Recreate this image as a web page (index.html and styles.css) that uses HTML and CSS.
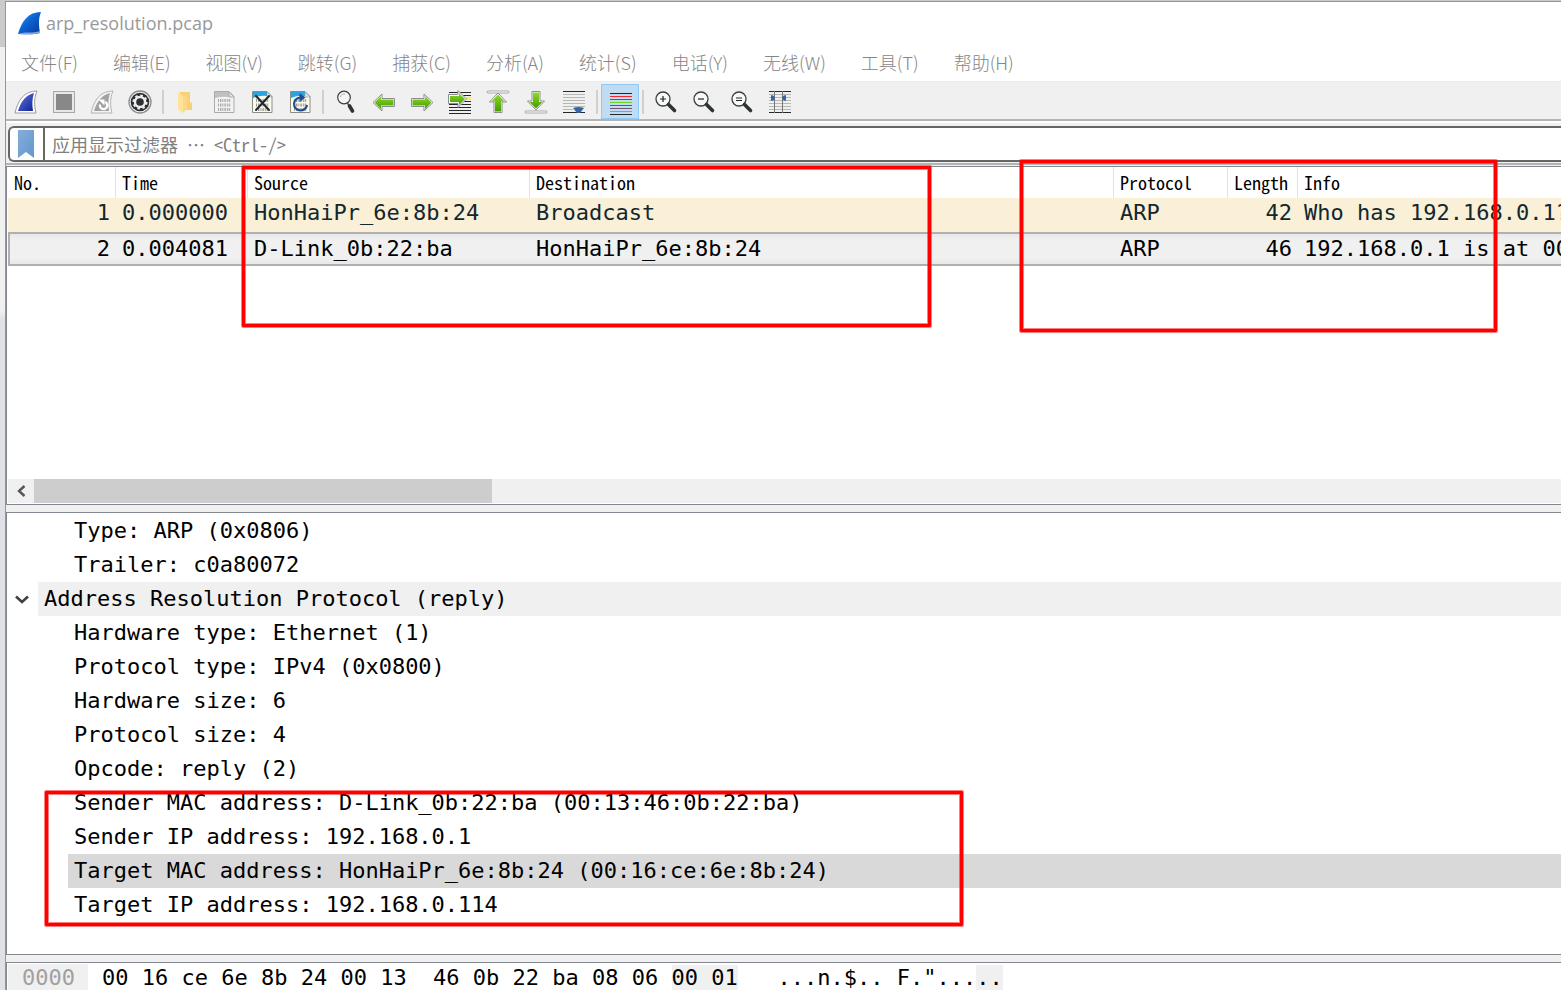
FILE: index.html
```html
<!DOCTYPE html>
<html lang="zh-CN">
<head>
<meta charset="utf-8">
<title>arp_resolution.pcap</title>
<link rel="stylesheet" href="styles.css">
</head>
<body>
<svg class="defs" aria-hidden="true">
  <defs>
    <linearGradient id="blueFin" x1="0" y1="0" x2="1" y2="1"><stop offset="0" stop-color="#5b7bea"/><stop offset="1" stop-color="#16208f"/></linearGradient>
    <linearGradient id="logoFin" x1="0" y1="0" x2="1" y2="1"><stop offset="0" stop-color="#1e9bf5"/><stop offset=".5" stop-color="#0a5fd0"/><stop offset="1" stop-color="#0a3796"/></linearGradient>
    <linearGradient id="green" x1="0" y1="0" x2="0" y2="1"><stop offset="0" stop-color="#8ddb2a"/><stop offset="1" stop-color="#449c02"/></linearGradient>
    <linearGradient id="flag" x1="0" y1="0" x2="1" y2="1"><stop offset="0" stop-color="#84aeda"/><stop offset="1" stop-color="#6396cc"/></linearGradient>
    <g id="bits" stroke-width="3" stroke-dasharray="1 1 1 .6">
      <path d="M6 10.500h13M6 15h13M6 19.500h13"/>
    </g>
    <g id="lens">
      <circle cx="9" cy="9" r="7" fill="#f8f8f8" stroke="#3a3f3e" stroke-width="1.3"/>
      <path d="M14.500 14.500l6 6" stroke="#2e3436" stroke-width="3.6" stroke-linecap="round"/>
    </g>
  </defs>
</svg>
<div class="window">
  <header class="titlebar">
    <svg class="logo" viewBox="0 0 24 24"><path d="M1 23C5 10 11 1 24 1C21 8 22 15 23 22C16 24 8 23 1 23Z" fill="url(#logoFin)"/><path d="M1 23C8 20 16 23 23 20V22C16 24 8 23 1 23Z" fill="#7fa8de"/></svg>
    <h1 class="title">arp_resolution.pcap</h1>
  </header>
  <nav class="menubar">
    <button>文件(F)</button><button>编辑(E)</button><button>视图(V)</button><button>跳转(G)</button><button>捕获(C)</button><button>分析(A)</button><button>统计(S)</button><button>电话(Y)</button><button>无线(W)</button><button>工具(T)</button><button>帮助(H)</button>
  </nav>
  <div class="toolbar" role="toolbar">
    <button aria-label="Start capture"><svg viewBox="0 0 24 24"><path d="M1 23C4 10 10 1 23 1C20 8 20 15 22 23Z" fill="#fff" stroke="#9b9b9b"/><path d="M4 21C7 11 12 5 20 3C18 9 18 15 19 21Z" fill="url(#blueFin)"/></svg></button>
    <button aria-label="Stop capture"><svg viewBox="0 0 24 24"><rect x="1.500" y="1.500" width="21" height="21" fill="#e8e8e8" stroke="#a8a8a8"/><rect x="4" y="4" width="16" height="16" fill="#888"/></svg></button>
    <button aria-label="Restart capture"><svg viewBox="0 0 24 24"><path d="M1 23C4 10 10 1 23 1C20 8 20 15 22 23Z" fill="#f3f3f3" stroke="#b4b4b4"/><path d="M4 21C7 11 12 5 20 3C18 9 18 15 19 21Z" fill="#a3a3a3"/><path d="M10 14.500a3.700 3.700 0 1 0 5-2.500" fill="none" stroke="#fff" stroke-width="2.300"/><path d="M8.500 9.500h6v6z" fill="#fff"/></svg></button>
    <button aria-label="Capture options"><svg viewBox="0 0 24 24"><circle cx="12" cy="12" r="11" fill="#f2f2f2" stroke="#8d8d8d" stroke-width="1.300"/><circle cx="12" cy="12" r="9.300" fill="#2d3033"/><circle cx="12" cy="12" r="5" fill="none" stroke="#eee" stroke-width="2.400"/><circle cx="12" cy="12" r="6.600" fill="none" stroke="#eee" stroke-width="2" stroke-dasharray="2.600 2.580"/><circle cx="12" cy="12" r="2.600" fill="#2d3033"/></svg></button>
    <span class="sep"></span>
    <button aria-label="Open file"><svg viewBox="0 0 24 24"><path d="M6 2h10v10l2 1v7H6z" fill="#f8d075"/><path d="M4 2l5 4v17l-5-3z" fill="#ffe39b"/><path d="M9 8l4-4v15l-4 4z" fill="#fbd983"/></svg></button>
    <button aria-label="Save file"><svg viewBox="0 0 24 24"><path d="M2.500 1.500H17l5 5v16H2.500z" fill="#f2f2f2" stroke="#ababab"/><path d="M3 2h14v5q-7-1-14 1z" fill="#c0c0c0"/><path d="M17 2v5h5z" fill="#e5e5e5" stroke="#ababab"/><use href="#bits" stroke="#a8a8a8"/></svg></button>
    <button aria-label="Close file"><svg viewBox="0 0 24 24"><path d="M2.500 1.500H17l5 5v16H2.500z" fill="#fcfcec" stroke="#8c8c84"/><path d="M3 2h14v4q-7-1-14 2z" fill="#2ba5e2"/><path d="M17 2v5h5z" fill="#d6e9f0" stroke="#8c8c84" stroke-width=".5"/><use href="#bits" stroke="#999"/><path d="M6 6l13 14M19 6L6 20" stroke="#24282c" stroke-width="2" stroke-linecap="round"/></svg></button>
    <button aria-label="Reload file"><svg viewBox="0 0 24 24"><path d="M2.500 1.500H17l5 5v16H2.500z" fill="#fcfcec" stroke="#8c8c84"/><path d="M3 2h14v4q-7-1-14 2z" fill="#2ba5e2"/><path d="M17 2v5h5z" fill="#d6e9f0" stroke="#8c8c84" stroke-width=".5"/><use href="#bits" stroke="#999"/><path d="M12.500 7.500a6.500 6.500 0 1 0 6.500 7.500" fill="none" stroke="#204e92" stroke-width="2.200"/><path d="M11.500 3l6 4.500-6 4.500z" fill="#204e92"/></svg></button>
    <span class="sep"></span>
    <button aria-label="Find packet"><svg viewBox="0 0 24 24"><circle cx="10" cy="7.500" r="6.300" fill="#f6f6f6" stroke="#3a3f3e" stroke-width="1.200"/><path d="M6.500 7a3.500 3.500 0 0 1 4.500-3" fill="none" stroke="#aaa"/><path d="M13 12.500l2 3" stroke="#555" stroke-width="1.500"/><path d="M15.500 16l3 5" stroke="#2e3436" stroke-width="3.600" stroke-linecap="round"/></svg></button>
    <button aria-label="Previous packet"><svg viewBox="0 0 24 24"><path d="M1 12.500L10 4v4.500h12.500v8H10V21z" fill="#fff" stroke="#8d8d8d" stroke-linejoin="round"/><path d="M2.500 12.500L9 6v3.500h12.500v6H9V19z" fill="url(#green)"/></svg></button>
    <button aria-label="Next packet"><svg viewBox="0 0 24 24"><path d="M23 12.500L14 4v4.500H1.500v8H14V21z" fill="#fff" stroke="#8d8d8d" stroke-linejoin="round"/><path d="M21.500 12.500L15 6v3.500H2.500v6H15V19z" fill="url(#green)"/></svg></button>
    <button aria-label="Go to packet"><svg viewBox="0 0 24 24"><path d="M1 2.500h22M1 17.500h22M1 20.500h22M1 23.500h22M1 14.500h22M15 5.500h8M15 11.500h8" stroke="#24282a"/><path d="M17 8.500h6" stroke="#fce94f" stroke-width="3"/><path d="M18.500 9L10 .5v4H.5v9H10v4z" fill="#fff" stroke="#8d8d8d" stroke-linejoin="round"/><path d="M17 9l-6-6v3H2v6h9v3z" fill="url(#green)"/></svg></button>
    <button aria-label="First packet"><svg viewBox="0 0 24 24"><rect x="1" y="1" width="22" height="2" rx="1" fill="#fff" stroke="#888" stroke-width=".7"/><path d="M12 3L3.500 12H8v10.500h8V12h4.500z" fill="#fff" stroke="#8d8d8d" stroke-linejoin="round"/><path d="M12 4.500l-6.500 7H9v10h6v-10h3.500z" fill="url(#green)"/></svg></button>
    <button aria-label="Last packet"><svg viewBox="0 0 24 24"><rect x="1" y="21" width="22" height="2" rx="1" fill="#fff" stroke="#888" stroke-width=".7"/><path d="M12 20l-8.500-9H8V1.500h8V11h4.500z" fill="#fff" stroke="#8d8d8d" stroke-linejoin="round"/><path d="M12 18.500L5.500 12H9V2.500h6V12h3.500z" fill="url(#green)"/></svg></button>
    <button aria-label="Auto scroll"><svg viewBox="0 0 24 24"><path d="M1 1.500h22M1 22.500h22" stroke="#24282a"/><path d="M1 4.500h22M1 7.500h22M1 10.500h22M1 13.500h22M1 16.500h22M1 19.500h10" stroke="#b5b8b0"/><path d="M11 18q5.500-2 11 0l-4 5h-3z" fill="#3465a4"/></svg></button>
    <span class="sep"></span>
    <button class="active" aria-label="Colorize" aria-pressed="true"><svg viewBox="0 0 24 24"><g><path d="M1 2.500h22M1 23.500h22" stroke="#24282a"/><path d="M1 5.500h22" stroke="#ef2929"/><path d="M1 8.500h22" stroke="#3465a4"/><path d="M1 11.500h22" stroke="#73d216"/><path d="M1 14.500h22" stroke="#3465a4"/><path d="M1 17.500h22" stroke="#75507b"/><path d="M1 20.500h22" stroke="#c4a000"/></g></svg></button>
    <span class="sep"></span>
    <button aria-label="Zoom in"><svg viewBox="0 0 24 24"><use href="#lens"/><path d="M6 9h6M9 6v6" stroke="#222" stroke-width="1.200"/></svg></button>
    <button aria-label="Zoom out"><svg viewBox="0 0 24 24"><use href="#lens"/><path d="M6 9h6" stroke="#222" stroke-width="1.200"/></svg></button>
    <button aria-label="Normal size"><svg viewBox="0 0 24 24"><use href="#lens"/><path d="M6 8h6M6 10.500h6" stroke="#222" stroke-width="1.200"/></svg></button>
    <button aria-label="Resize columns"><svg viewBox="0 0 24 24"><path d="M1 1.500h22M1 22.500h22" stroke="#24282a"/><path d="M1 4.500h22M1 7.500h22M1 10.500h22M1 13.500h22M1 16.500h22M1 19.500h22" stroke="#b5b8b0"/><path d="M6.500 1v22M14.500 1v22" stroke="#777"/><path d="M3.500 5.500l2.500 1v3l-2.500 1zM17.500 5.500l-2.500 1v3l2.500 1z" fill="#3465a4" stroke="#3465a4"/></svg></button>
  </div>
  <div class="filterbar">
    <div class="filterbox">
      <button class="bookmark" aria-label="Bookmark"><svg viewBox="0 0 16 28"><path d="M0 0h16v28l-8-6-8 6z" fill="url(#flag)"/></svg></button>
      <input class="filter" type="text" aria-label="Display filter" placeholder="应用显示过滤器 … &lt;Ctrl-/&gt;">
    </div>
  </div>
  <main class="panes">
    <section class="pane packets">
      <table class="list">
        <colgroup><col class="c-no"><col class="c-time"><col class="c-src"><col class="c-dst"><col class="c-proto"><col class="c-len"><col></colgroup>
        <thead><tr><th>No.</th><th>Time</th><th>Source</th><th>Destination</th><th>Protocol</th><th>Length</th><th>Info</th></tr></thead>
        <tbody>
          <tr class="arp"><td class="num">1</td><td>0.000000</td><td>HonHaiPr_6e:8b:24</td><td>Broadcast</td><td>ARP</td><td class="num">42</td><td>Who has 192.168.0.1?</td></tr>
          <tr class="current"><td class="num">2</td><td>0.004081</td><td>D-Link_0b:22:ba</td><td>HonHaiPr_6e:8b:24</td><td>ARP</td><td class="num">46</td><td>192.168.0.1 is at 00</td></tr>
        </tbody>
      </table>
      <div class="hscroll">
        <button aria-label="Scroll left"><svg viewBox="0 0 10 12"><path d="M8.500 1L3 6l5.500 5" fill="none" stroke="#555" stroke-width="2.400"/></svg></button>
        <div class="track"><div class="thumb"></div></div>
      </div>
    </section>
    <section class="pane details">
      <ul class="tree">
        <li class="leaf">Type: ARP (0x0806)</li>
        <li class="leaf">Trailer: c0a80072</li>
        <li class="branch"><button aria-label="Collapse"><svg viewBox="0 0 14 9"><path d="M1 1.500l6 5.500 6-5.500" fill="none" stroke="#404040" stroke-width="2.600"/></svg></button><span>Address Resolution Protocol (reply)</span></li>
        <li class="leaf">Hardware type: Ethernet (1)</li>
        <li class="leaf">Protocol type: IPv4 (0x0800)</li>
        <li class="leaf">Hardware size: 6</li>
        <li class="leaf">Protocol size: 4</li>
        <li class="leaf">Opcode: reply (2)</li>
        <li class="leaf">Sender MAC address: D-Link_0b:22:ba (00:13:46:0b:22:ba)</li>
        <li class="leaf">Sender IP address: 192.168.0.1</li>
        <li class="leaf selected">Target MAC address: HonHaiPr_6e:8b:24 (00:16:ce:6e:8b:24)</li>
        <li class="leaf">Target IP address: 192.168.0.114</li>
      </ul>
    </section>
    <section class="pane bytes">
      <span class="offset">0000</span>
      <pre class="hex">00 16 ce 6e 8b 24 00 13  46 0b 22 ba 08 06 <mark>00 01</mark>   ...n.$.. F."...<mark>..</mark></pre>
    </section>
  </main>
</div>
<div class="note note-addresses"></div>
<div class="note note-protocol"></div>
<div class="note note-fields"></div>
</body>
</html>
```
FILE: styles.css
```css
* { box-sizing: border-box; }
body {
  margin: 0;
  height: 100vh;
  overflow: hidden;
  position: relative;
  padding: 1px 0 0 5px;
  background: linear-gradient(#cbcbcb 47px, #f0f0f0 47px, #f0f0f0 310px, #dfe1e4 320px);
  font-family: "DejaVu Sans Mono", "Noto Sans CJK SC", monospace;
  font-size: 22px;
  color: #000;
}
button { border: 0; padding: 0; background: none; font: inherit; color: inherit; }
.defs { position: absolute; width: 0; height: 0; }
.window {
  height: 100%;
  display: flex;
  flex-direction: column;
  border: 1px solid #969696;
  border-width: 1px 0 0 1px;
  background: #fff;
}
.titlebar { display: flex; align-items: center; gap: 5px; height: 42px; padding-left: 11px; }
.logo { width: 24px; height: 24px; }
.title {
  margin: 0;
  font: 400 18px/24px "Open Sans", "Noto Sans", sans-serif;
  color: #999;
}
.menubar {
  display: flex;
  gap: 35px;
  height: 38px;
  padding-left: 15px;
  border-bottom: 1px solid #ececec;
  font: 300 18px/36px "Noto Sans CJK SC", sans-serif;
  color: #868686;
}
.menubar button { white-space: nowrap; height: 36px; }
.toolbar {
  display: flex;
  height: 39px;
  padding: 2px 0 0 1px;
  background: #f0f0f0;
  border-bottom: 2px solid #b4b4b4;
}
.toolbar button {
  width: 38px;
  height: 35px;
  padding-top: 1px;
  display: grid;
  place-items: center;
}
.toolbar svg { width: 24px; height: 24px; }
.toolbar .active { background: #c0dcf3; border: 1px solid #90c8f6; padding: 3px 0 0 2px; }
.sep { width: 2px; height: 24px; margin: 6px 3px; background: #d0d0d0; }
.filterbar {
  padding: 3px 0 1px 2px;
  background: #f0f0f0;
  border-top: 2px solid #fff;
  border-bottom: 2px solid #b4b4b4;
}
.filterbox {
  display: flex;
  height: 36px;
  border: 2px solid #666;
  border-right: 0;
  border-radius: 6px 0 0 6px;
  background: #fff;
}
.bookmark { width: 35px; padding-right: 1px; display: grid; place-items: center; border-right: 2px solid #666; }
.bookmark svg { width: 16px; height: 28px; }
.filter {
  flex: 1;
  min-width: 0;
  border: 0;
  padding: 0 7px;
  background: none;
  font: 300 18px "Noto Sans Mono CJK SC", "Noto Sans CJK SC", monospace;
}
.filter::placeholder { color: #808080; }
.panes {
  flex: 1;
  min-height: 0;
  display: flex;
  flex-direction: column;
  gap: 7px;
  padding-top: 1px;
  background: #f0f0f0;
}
.pane {
  background: #fff;
  border: 1px solid #828790;
  border-right: 0;
  padding-left: 1px;
  min-height: 0;
  overflow: hidden;
}
.packets {
  flex: 339 1 0;
  display: flex;
  flex-direction: column;
  justify-content: space-between;
}
.list { width: 100%; table-layout: fixed; border-collapse: separate; border-spacing: 0; }
.list th, .list td {
  padding: 0 6px;
  text-align: left;
  white-space: nowrap;
  overflow: hidden;
}
.list th {
  height: 31px;
  padding-bottom: 2px;
  border-right: 1px solid #e2e2e2;
  font: 400 18px/26px "Noto Sans Mono CJK SC", "Liberation Mono", monospace;
}
.list th:last-child { border-right: 0; }
.list td:last-child, .list th:last-child { padding-right: 0; }
.list .num { text-align: right; }
.list td { height: 34px; line-height: 30px; }
.arp { background: #faefd7; color: #12272e; }
.list .arp td { padding-bottom: 4px; }
.current td {
  background: linear-gradient(#e8e8e8, #f0f0f0 6px, #f0f0f0 24px, #e8e8e8);
  border: 2px solid #b0b0b0;
  border-width: 2px 0;
}
.current td:first-child { border-left-width: 2px; }
.c-no { width: 108px; }
.c-time { width: 132px; }
.c-src { width: 282px; }
.c-dst { width: 584px; }
.c-proto { width: 114px; }
.c-len { width: 70px; }
.hscroll { display: flex; height: 24px; margin-bottom: 1px; background: #f0f0f0; }
.hscroll button { width: 26px; display: grid; place-items: center; }
.hscroll svg { width: 10px; height: 12px; }
.track { flex: 1; display: flex; }
.thumb { width: 30%; background: #cdcdcd; }
.details { flex: 443 1 0; }
.tree { margin: 0; padding: 1px 0 0; list-style: none; line-height: 34px; white-space: nowrap; }
.leaf { margin-left: 60px; padding-left: 6px; }
.selected { background: #d9d9d9; }
.branch { display: flex; }
.branch button { width: 30px; padding-right: 3px; display: grid; place-items: center; }
.branch svg { width: 14px; height: 9px; }
.branch span { flex: 1; padding-left: 6px; background: #f0f0f0; }
.bytes { display: flex; height: 28px; border-bottom: 0; padding-top: 1px; line-height: 24px; }
.offset { padding: 2px 13px 0 14px; background: #f0f0f0; color: #a0a0a0; }
.hex { margin: 0; padding: 2px 0 0 14px; font: inherit; }
.hex mark { background: #f0f0f0; color: inherit; }
.note {
  position: absolute;
  border: 3px solid #f00;
  border-radius: 1px;
  box-shadow: 0 0 0 1px rgba(255, 0, 0, .5), inset 0 0 0 1px rgba(255, 0, 0, .5);
  pointer-events: none;
}
.note-addresses { left: 242px; top: 166px; width: 689px; height: 161px; }
.note-protocol { left: 1020px; top: 160px; width: 477px; height: 172px; }
.note-fields { left: 45px; top: 791px; width: 918px; height: 135px; }
```
